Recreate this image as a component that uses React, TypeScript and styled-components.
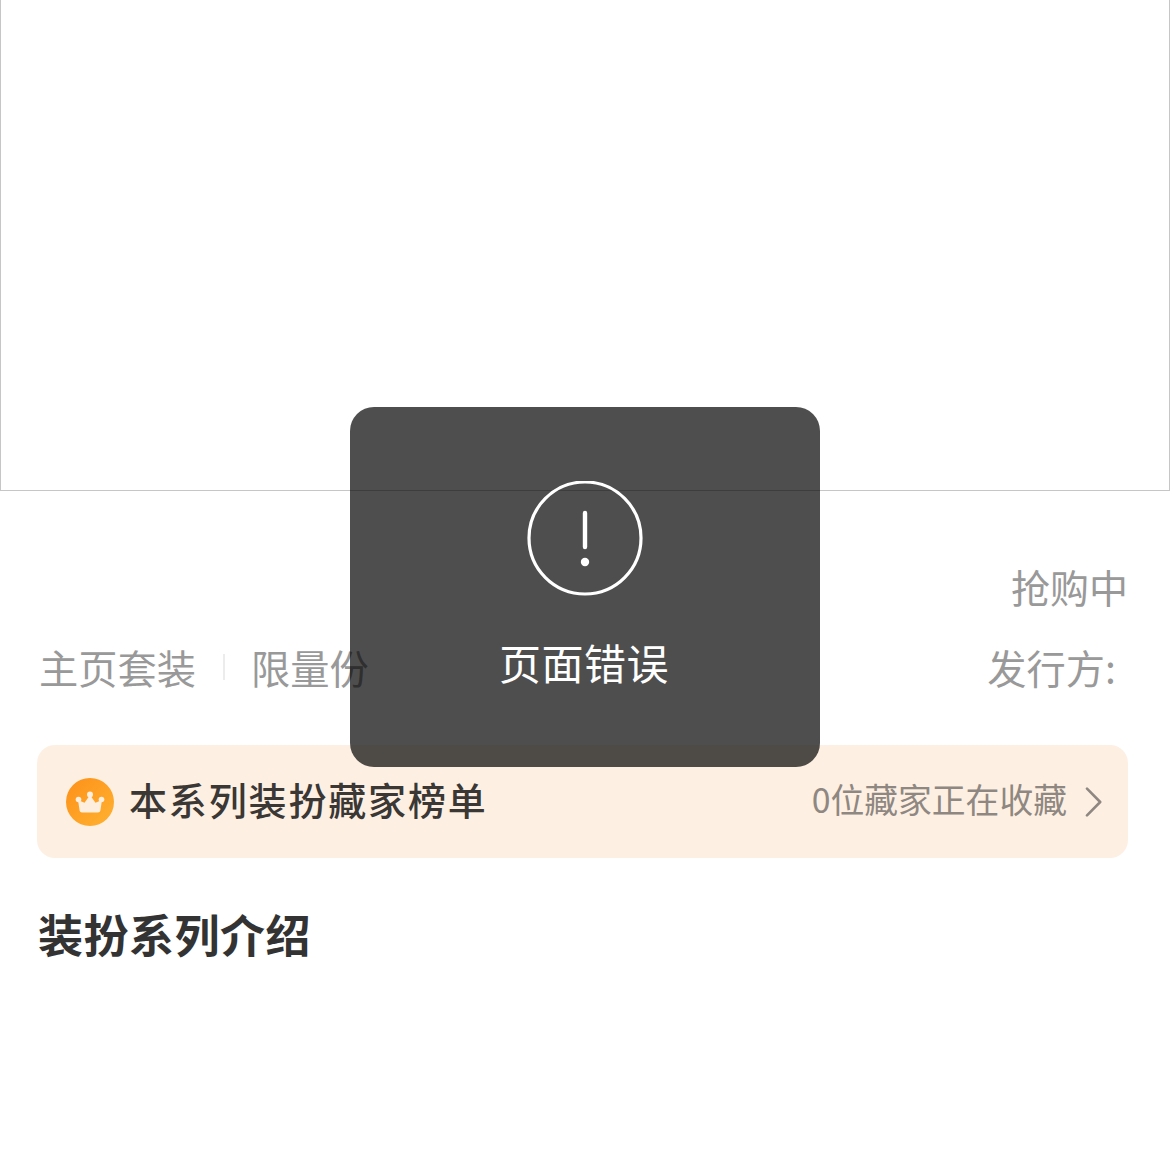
import React from "react";
import styled, { createGlobalStyle } from "styled-components";

const Global = createGlobalStyle`
  html, body { margin: 0; padding: 0; background: #fff; }
  body { font-family: "Noto Sans CJK SC", "Noto Sans", sans-serif; }
`;

const Page = styled.div`
  position: relative;
  width: 1170px;
  height: 1170px;
  overflow: hidden;
  background: #fff;
`;

const Banner = styled.div`
  box-sizing: border-box;
  height: 491px;
  border: 1px solid #c6c6c6;
  border-top: none;
  background: #fff;
`;

const Info = styled.div`
  padding: 0 42px 0 39px;
`;

const Status = styled.div`
  margin-top: 69px;
  height: 52px;
  font-size: 39px;
  line-height: 52px;
  color: #999;
  text-align: right;
`;

const MetaRow = styled.div`
  margin-top: 29px;
  height: 52px;
  display: flex;
  align-items: center;
  justify-content: space-between;
  font-size: 39.25px;
  line-height: 52px;
  color: #999;
`;

const MetaLeft = styled.div`
  display: flex;
  align-items: center;
`;

const Divider = styled.span`
  width: 2px;
  height: 26px;
  margin: 0 26px 0 27px;
  background: #ececec;
`;

const Publisher = styled.span`
  margin-right: 12px;
`;

const RankCard = styled.div`
  box-sizing: border-box;
  height: 113px;
  margin: 52px 42px 0 37px;
  padding: 0 26px 0 29px;
  display: flex;
  align-items: center;
  justify-content: space-between;
  background: #fdf0e3;
  border-radius: 18px;
`;

const RankLeft = styled.div`
  display: flex;
  align-items: center;
  gap: 15px;
`;

const RankTitle = styled.span`
  position: relative;
  top: -3px;
  font-size: 38px;
  line-height: 50px;
  font-weight: 500;
  letter-spacing: 1.85px;
  color: #3a3735;
`;

const RankRight = styled.div`
  display: flex;
  align-items: center;
  gap: 18px;
`;

const RankCount = styled.span`
  position: relative;
  top: -3px;
  font-size: 33.8px;
  line-height: 46px;
  color: #8f8781;
`;

const SectionTitle = styled.h2`
  margin: 46px 0 0 38px;
  font-size: 45px;
  line-height: 60px;
  font-weight: 700;
  letter-spacing: 0.5px;
  color: #333;
`;

const Toast = styled.div`
  position: absolute;
  left: 350px;
  top: 407px;
  box-sizing: border-box;
  width: 470px;
  height: 360px;
  padding-top: 74px;
  display: flex;
  flex-direction: column;
  align-items: center;
  gap: 37px;
  background: rgba(0, 0, 0, 0.695);
  border-radius: 24px;
`;

const ToastText = styled.div`
  margin-right: 2px;
  font-size: 42px;
  line-height: 56px;
  letter-spacing: 0.5px;
  color: #fff;
`;

const CrownBadge = () => (
  <svg width="48" height="48" viewBox="0 0 48 48" aria-hidden="true">
    <defs>
      <linearGradient id="crownBg" x1="0" y1="0" x2="1" y2="1">
        <stop offset="0" stopColor="#fd9018" />
        <stop offset="1" stopColor="#ffb232" />
      </linearGradient>
    </defs>
    <circle cx="24" cy="24" r="24" fill="url(#crownBg)" />
    <circle cx="24" cy="16.5" r="3" fill="#fdeedd" />
    <circle cx="12.5" cy="21.5" r="2.8" fill="#fdeedd" />
    <circle cx="35.5" cy="21.5" r="2.8" fill="#fdeedd" />
    <path
      d="M16 34.5c-1.3 0-2.1-.7-2.4-1.9L12 22l6.5 2.8L24 17l5.5 7.8L36 22l-1.6 10.6c-.3 1.2-1.1 1.9-2.4 1.9z"
      fill="#fdeedd"
    />
  </svg>
);

const Chevron = () => (
  <svg width="17" height="30" viewBox="0 0 17 30" aria-hidden="true">
    <path d="M2 1.6L15.2 15 2 28.4" fill="none" stroke="#8f8781" strokeWidth="2.6" strokeLinecap="round" strokeLinejoin="round" />
  </svg>
);

const AlertIcon = () => (
  <svg width="116" height="116" viewBox="0 0 116 116" aria-hidden="true">
    <circle cx="58" cy="57" r="56" fill="none" stroke="#fff" strokeWidth="3.2" />
    <path d="M58 32v34" stroke="#fff" strokeWidth="4.4" strokeLinecap="round" />
    <circle cx="58" cy="81" r="4.2" fill="#fff" />
  </svg>
);

export default function App() {
  return (
    <Page>
      <Global />
      <Banner />
      <Info>
        <Status>抢购中</Status>
        <MetaRow>
          <MetaLeft>
            <span>主页套装</span>
            <Divider />
            <span>限量份</span>
          </MetaLeft>
          <Publisher>发行方:</Publisher>
        </MetaRow>
      </Info>
      <RankCard>
        <RankLeft>
          <CrownBadge />
          <RankTitle>本系列装扮藏家榜单</RankTitle>
        </RankLeft>
        <RankRight>
          <RankCount>0位藏家正在收藏</RankCount>
          <Chevron />
        </RankRight>
      </RankCard>
      <SectionTitle>装扮系列介绍</SectionTitle>
      <Toast>
        <AlertIcon />
        <ToastText>页面错误</ToastText>
      </Toast>
    </Page>
  );
}
